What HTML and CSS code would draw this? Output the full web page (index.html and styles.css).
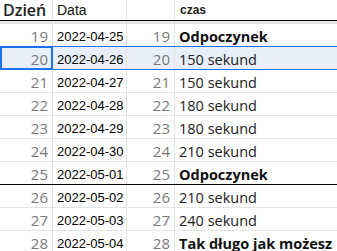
FILE: index.html
```html
<!DOCTYPE html>
<html lang="pl">
<head>
<meta charset="utf-8">
<link rel="stylesheet" href="styles.css">
</head>
<body>
<div class="sheet">
  <div class="row head">
    <div class="cell ca h-day">Dzień</div>
    <div class="cell cb h-date">Data</div>
    <div class="cell cc"></div>
    <div class="cell cd h-time">czas</div>
  </div>
  <div class="freeze"></div>
  <div class="row above-sel">
    <div class="cell ca num">19</div><div class="cell cb date">2022-04-25</div><div class="cell cc num">19</div><div class="cell cd txt bold">Odpoczynek</div>
  </div>
  <div class="row sel">
    <div class="cell ca num active">20</div><div class="cell cb date">2022-04-26</div><div class="cell cc num">20</div><div class="cell cd txt">150 sekund</div>
  </div>
  <div class="row">
    <div class="cell ca num">21</div><div class="cell cb date">2022-04-27</div><div class="cell cc num">21</div><div class="cell cd txt">150 sekund</div>
  </div>
  <div class="row">
    <div class="cell ca num">22</div><div class="cell cb date">2022-04-28</div><div class="cell cc num">22</div><div class="cell cd txt">180 sekund</div>
  </div>
  <div class="row">
    <div class="cell ca num">23</div><div class="cell cb date">2022-04-29</div><div class="cell cc num">23</div><div class="cell cd txt">180 sekund</div>
  </div>
  <div class="row">
    <div class="cell ca num">24</div><div class="cell cb date">2022-04-30</div><div class="cell cc num">24</div><div class="cell cd txt">210 sekund</div>
  </div>
  <div class="row week-end">
    <div class="cell ca num">25</div><div class="cell cb date">2022-05-01</div><div class="cell cc num">25</div><div class="cell cd txt bold">Odpoczynek</div>
  </div>
  <div class="row">
    <div class="cell ca num">26</div><div class="cell cb date">2022-05-02</div><div class="cell cc num">26</div><div class="cell cd txt">210 sekund</div>
  </div>
  <div class="row">
    <div class="cell ca num">27</div><div class="cell cb date">2022-05-03</div><div class="cell cc num">27</div><div class="cell cd txt">240 sekund</div>
  </div>
  <div class="row">
    <div class="cell ca num">28</div><div class="cell cb date">2022-05-04</div><div class="cell cc num">28</div><div class="cell cd txt bold">Tak długo jak możesz</div>
  </div>
</div>
</body>
</html>
```

FILE: styles.css
```css
html, body {
  margin: 0;
  padding: 0;
  background: #ffffff;
}

.sheet {
  width: 337px;
  overflow: hidden;
}

.row {
  display: grid;
  grid-template-columns: 53px 74px 48px 1fr;
  height: 23px;
  box-sizing: border-box;
  border-bottom: 1px solid #e2e3e3;
}

.row.head {
  height: 21px;
  border-bottom: 1px solid #000000;
}

.freeze {
  height: 3px;
  background: #e4e5e7;
}

.cell {
  box-sizing: border-box;
  border-right: 1px solid #e2e3e3;
  display: flex;
  align-items: flex-end;
  padding-bottom: 2px;
  white-space: nowrap;
  overflow: visible;
}

.cell.cd {
  border-right: none;
}

.h-day {
  font-family: "Open Sans", sans-serif;
  font-weight: 600;
  font-size: 16px;
  color: #1f1f1f;
  padding-left: 3px;
  padding-bottom: 0;
  line-height: 20px;
}

.h-date {
  font-family: "Liberation Sans", Arial, sans-serif;
  font-size: 14px;
  color: #111111;
  padding-left: 4px;
  padding-bottom: 2px;
}

.h-time {
  font-family: "Liberation Sans", Arial, sans-serif;
  font-weight: 700;
  font-size: 12px;
  color: #1f1f1f;
  padding-left: 5px;
  padding-bottom: 3px;
}

.num {
  justify-content: flex-end;
  font-family: "Open Sans", sans-serif;
  font-size: 15px;
  color: #7a7a7a;
  padding-right: 4px;
  padding-bottom: 0;
}

.date {
  font-family: "Liberation Sans", Arial, sans-serif;
  font-size: 13px;
  color: #000000;
  padding-left: 4px;
  padding-bottom: 2px;
}

.txt {
  font-family: "Open Sans", sans-serif;
  font-size: 14.5px;
  color: #222222;
  padding-left: 4px;
  padding-bottom: 0;
}

.txt.bold {
  font-weight: 700;
  color: #111111;
}

.row.above-sel {
  border-bottom-color: #1a73e8;
}

.row.sel {
  background: #e8effb;
  border-bottom-color: #1a73e8;
}

.cell.active {
  box-shadow: inset 0 0 0 1px #1a73e8, inset 2px 0 0 #1a73e8;
  border-right-color: #1a73e8;
}

.row.week-end {
  border-bottom-color: #000000;
}
```
